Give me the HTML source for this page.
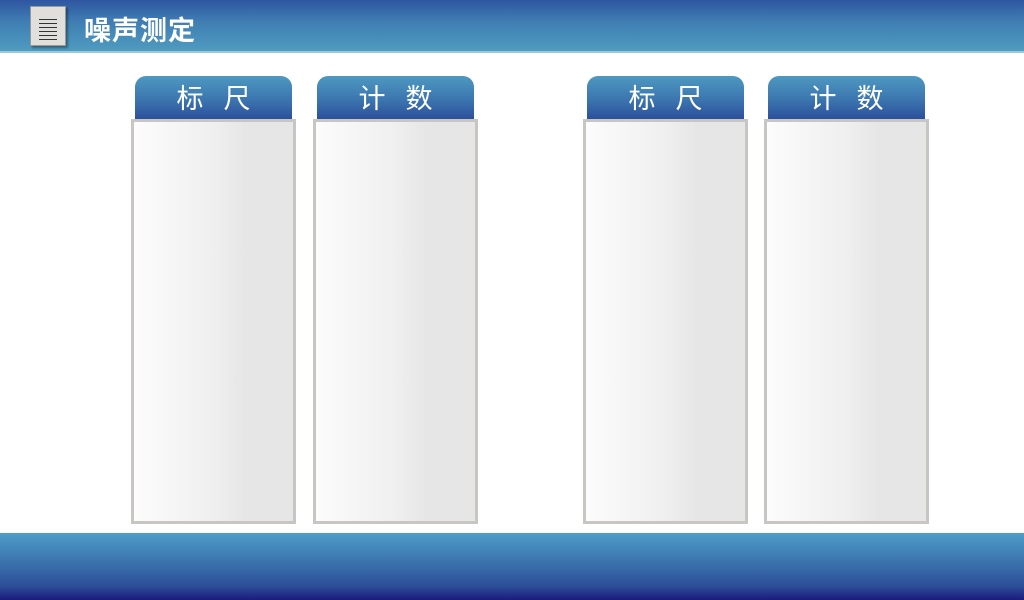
<!DOCTYPE html><html><head><meta charset="utf-8"><style>
body{margin:0;width:1024px;height:600px;position:relative;overflow:hidden;background:#fff;font-family:"Liberation Sans","Noto Sans CJK SC",sans-serif}
.hd{position:absolute;left:0;top:0;width:1024px;height:51px;background:linear-gradient(#2e56a0,#3f7cb2 40%,#4e9cc0);border-bottom:2px solid #9cc8dc}
.title{position:absolute;left:84px;top:9px;color:#fff;font-size:27px;font-weight:bold;letter-spacing:1px}
.doc{position:absolute;left:30px;top:6px;width:34px;height:38px;background:#e0dfdb;border:1px solid #999;box-shadow:2px 2px 2px rgba(0,0,0,.35)}
.doc i{position:absolute;left:8px;width:18px;height:1px;background:#333}
.ft{position:absolute;left:0;top:533px;width:1024px;height:67px;background:linear-gradient(#4e9dc8,#3a72ad 45%,#2c4d98 80%,#1c1a7c)}
.tab{position:absolute;top:76px;width:157px;height:43px;border-radius:11px 11px 0 0;background:linear-gradient(#4e99c1,#3a72ad 60%,#2c4f9c);color:#fff;font-size:27px;text-align:center;line-height:46px;letter-spacing:20px;text-indent:20px}
.box{position:absolute;top:119px;width:159px;height:399px;border:3px solid #c8c6c2;background:linear-gradient(90deg,#fcfcfc,#efefef 50%,#e6e6e6 70%,#e6e6e6)}
</style></head><body>
<div class="hd"><div class="doc"><i style="top:12px"></i><i style="top:16px"></i><i style="top:20px"></i><i style="top:24px"></i><i style="top:28px"></i><i style="top:32px"></i></div><div class="title">噪声测定</div></div>
<div class="tab" style="left:135px">标尺</div><div class="box" style="left:131px"></div>
<div class="tab" style="left:317px">计数</div><div class="box" style="left:313px"></div>
<div class="tab" style="left:587px">标尺</div><div class="box" style="left:583px"></div>
<div class="tab" style="left:768px">计数</div><div class="box" style="left:764px"></div>
<div class="ft"></div>
</body></html>
